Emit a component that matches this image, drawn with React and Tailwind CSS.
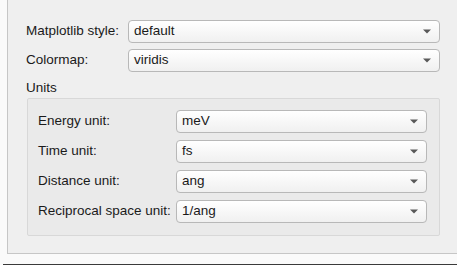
import React from "react";

const Arrow = () => (
  <svg width="8" height="5" viewBox="0 0 8 5" className="shrink-0">
    <path d="M0 0.5 H8 L4 4.5 Z" fill="#595959" />
  </svg>
);

function Combo({ value }) {
  return (
    <div className="flex-1 h-[23px] flex items-center justify-between pl-[5px] pr-[8px] rounded-[4px] border border-[#b8b8b8] bg-gradient-to-b from-white to-[#f0f0f0] text-[13.5px] text-[#1a1a1a]">
      <span>{value}</span>
      <Arrow />
    </div>
  );
}

function Row({ label, value, labelWidth }) {
  return (
    <div className="flex items-center">
      <div className={`${labelWidth} shrink-0 text-[13.5px] text-[#1a1a1a]`}>{label}</div>
      <Combo value={value} />
    </div>
  );
}

export default function App() {
  return (
    <div className="w-[457px] h-[265px] bg-[#fafafa] flex flex-col font-['Liberation_Sans',Arial,sans-serif]">
      <div className="h-[254px] flex shrink-0">
        <div className="ml-[7px] flex-1 bg-[#efefef] border-l border-b border-[#c6c6c6] pl-[18px] pr-[17px] pt-[20px]">
          <div className="flex flex-col gap-[6px]">
            <Row label="Matplotlib style:" value="default" labelWidth="w-[102px]" />
            <Row label="Colormap:" value="viridis" labelWidth="w-[102px]" />
          </div>
          <div className="mt-[7px] h-[19px] leading-[18px] text-[13.5px] text-[#1a1a1a]">Units</div>
          <div className="ml-px bg-[#eaeaea] border border-[#d8d8d8] rounded-[2px] pl-[10px] pr-[12px] pt-[11px] pb-[12px] flex flex-col gap-[7px]">
            <Row label="Energy unit:" value="meV" labelWidth="w-[138px]" />
            <Row label="Time unit:" value="fs" labelWidth="w-[138px]" />
            <Row label="Distance unit:" value="ang" labelWidth="w-[138px]" />
            <Row label="Reciprocal space unit:" value="1/ang" labelWidth="w-[138px]" />
          </div>
        </div>
      </div>
      <div className="flex-1" />
      <div className="h-px ml-[3px] bg-[#3a3a3a]" />
    </div>
  );
}
